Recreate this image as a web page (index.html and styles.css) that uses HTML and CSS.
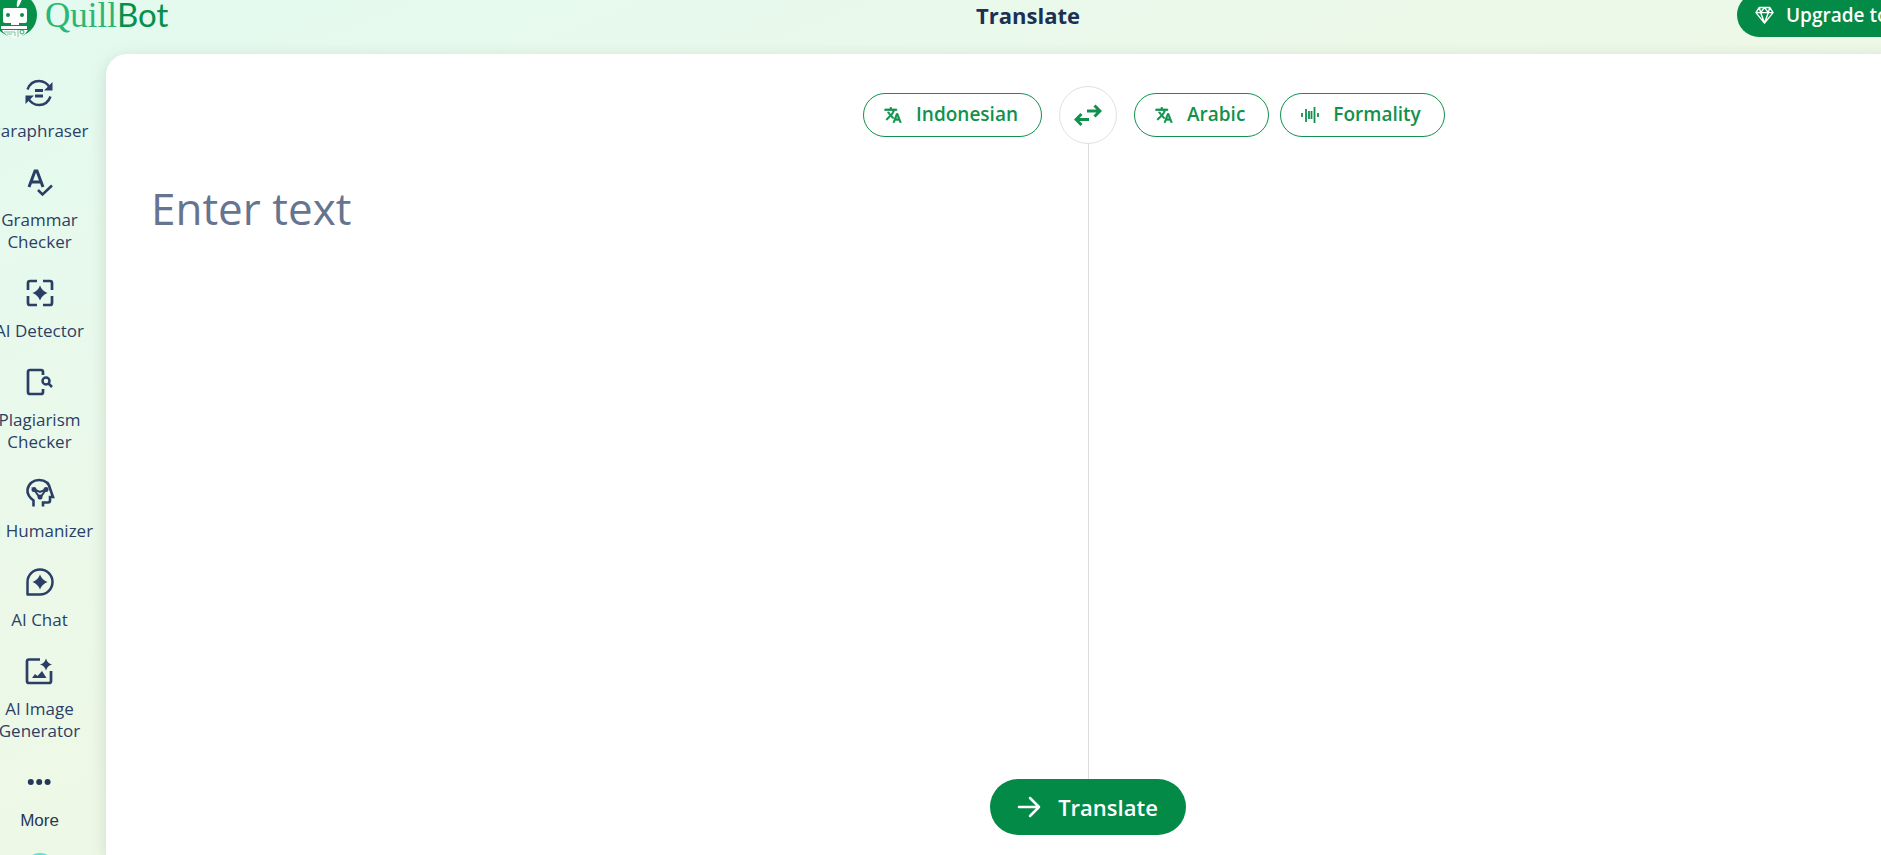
FILE: index.html
```html
<!DOCTYPE html>
<html lang="en">
<head>
<meta charset="utf-8">
<title>Translate - QuillBot</title>
<link rel="stylesheet" href="styles.css">
</head>
<body>
<div class="app">
  <header class="header">
    <a class="logo" href="#">
      <svg class="logo-mark" viewBox="0 0 46 46" aria-hidden="true">
        <circle cx="23" cy="23" r="22" fill="#06904a"/>
        <path d="M25 15c-1-5 1-10 6-12-1 4-2 8-5 12z" fill="#fff"/>
        <rect x="11" y="16" width="24" height="15" rx="2" fill="#fff"/>
        <path d="M19 31h8v2h-8zM9 34h26v3H9z" fill="#fff"/>
        <circle cx="16" cy="23" r="2" fill="#06904a"/><circle cx="30" cy="23" r="2" fill="#06904a"/>
        <path d="M10 38h26l-3 4-5 3-5 1-7-2-5-4z" fill="#f4fcf7"/>
        <path d="M12 40h11v4M15 42h5M26 38v7" fill="none" stroke="#7cc7a0"/>
        <circle cx="30" cy="40" r="2" fill="none" stroke="#3aa871"/>
      </svg>
      <span class="logo-text"><span class="logo-quill">Quill</span><span class="logo-bot">Bot</span></span>
    </a>
    <h1 class="title">Translate</h1>
    <div class="header-end">
      <button class="upgrade" type="button">
        <svg class="gem" viewBox="0 0 20 20" fill="none" stroke="currentColor" stroke-width="1.500" stroke-linejoin="round" aria-hidden="true"><path d="M4.500 1.500h11L19 7l-9 11L1 7zM1 7h18M6 7l4 11 4-11M4.500 1.500L6 7l4-5.500L14 7l1.500-5.500"/></svg>
        Upgrade to Premium
      </button>
    </div>
  </header>
  <div class="body">
    <nav class="sidebar">
      <a class="item" href="#">
        <svg class="icon" viewBox="0 0 30 30" aria-hidden="true"><path d="M3.500 11.500C5.500 6 10 3 15 3c5 0 8.500 2.500 11 7M26.500 18.500C24.500 24 20 27 15 27c-5 0-8.500-2.500-11-7" stroke-width="2.500"/><path class="solid" d="M28.500 4V12.500H20zM1.500 26V17.500H10z"/><path d="M11 12.500h8M11 18h8" stroke-width="3"/></svg>
        <span>Paraphraser</span></a>
      <a class="item" href="#">
        <svg class="icon" viewBox="0 0 30 30" aria-hidden="true"><path d="M4 20L10 4h2l6 16M6.500 15h9" stroke-width="3"/><path d="M13 23l4.500 4.500L27 18.500" stroke-width="2.500"/></svg>
        <span>Grammar<br>Checker</span></a>
      <a class="item" href="#">
        <svg class="icon" viewBox="0 0 30 30" aria-hidden="true"><path d="M3 12V5q0-2 2-2h7M18 3h7q2 0 2 2v7M27 18v7q0 2-2 2h-7M12 27H5q-2 0-2-2v-7" stroke-width="2.700"/><path class="solid" d="M15 7.500q2 5.500 7.500 7.500-5.500 2-7.500 7.500-2-5.500-7.500-7.500 5.500-2 7.500-7.500z"/></svg>
        <span>AI Detector</span></a>
      <a class="item" href="#">
        <svg class="icon" viewBox="0 0 30 30" aria-hidden="true"><path d="M19 8V5q0-2-2-2H6Q4 3 4 5v20q0 2 2 2h11q2 0 2-2v-3" stroke-width="2.700"/><circle cx="22" cy="14" r="3.500" stroke-width="2.500"/><path d="M24.500 16.500L28 20" stroke-width="2.500"/></svg>
        <span>Plagiarism<br>Checker</span></a>
      <a class="item" href="#">
        <svg class="icon" viewBox="0 0 30 30" aria-hidden="true"><path d="M8.500 28.500v-6C4.500 19.500 2 16 2.500 11.500 3.500 5.500 8.500 2 14 2c6.500 0 10.500 4 11.500 10l2.500 7h-3v3.500q0 2-2 2h-5v4" stroke-width="2.600"/><path d="M9 11.500l6 2.500 6-2.500L15 20z" stroke-width="2"/><path class="solid" d="M6.500 11.500a2.500 2.500 0 1 1 5 0a2.500 2.500 0 1 1-5 0zM18.500 11.500a2.500 2.500 0 1 1 5 0a2.500 2.500 0 1 1-5 0zM12.500 19a2.500 2.500 0 1 1 5 0a2.500 2.500 0 1 1-5 0z"/></svg>
        <span>AI Humanizer</span></a>
      <a class="item" href="#">
        <svg class="icon" viewBox="0 0 30 30" aria-hidden="true"><path d="M2.500 27.500V15A12.500 12.500 0 1 1 15 27.500z" stroke-width="2.500" stroke-linejoin="round"/><path class="solid" d="M15 7.500q2 5.500 7.500 7.500-5.500 2-7.500 7.500-2-5.500-7.500-7.500 5.500-2 7.500-7.500z"/></svg>
        <span>AI Chat</span></a>
      <a class="item" href="#">
        <svg class="icon" viewBox="0 0 30 30" aria-hidden="true"><path d="M16 3.500H5q-2 0-2 2V25q0 2 2 2h20q2 0 2-2V15" stroke-width="2.700"/><path class="solid" d="M22 2.500q1.500 5 6 6-4.500 1-6 6-1.500-5-6-6 4.500-1 6-6zM8 22l3-4 2.500 2L18 15l4.500 7z"/></svg>
        <span>AI Image<br>Generator</span></a>
      <button class="item item-more" type="button">
        <svg class="icon" viewBox="0 0 30 30" aria-hidden="true"><path class="solid" d="M3.800 15a3 3 0 1 1 6 0a3 3 0 1 1-6 0zM12.200 15a3 3 0 1 1 6 0a3 3 0 1 1-6 0zM20.600 15a3 3 0 1 1 6 0a3 3 0 1 1-6 0z"/></svg>
        <span>More</span></button>
      <a class="dot" href="#" aria-label="Extension"></a>
    </nav>
    <main class="card">
      <div class="toolbar">
        <div class="source">
          <button class="chip" type="button">
            <svg class="chip-icon" viewBox="0 0 24 24" aria-hidden="true"><path class="glyph" d="M12.870 15.070l-2.540-2.510.03-.03A17.520 17.520 0 0 0 14.070 6H17V4h-7V2H8v2H1v2h11.170C11.500 7.920 10.440 9.750 9 11.350 8.070 10.320 7.300 9.190 6.690 8h-2c.73 1.630 1.730 3.170 2.980 4.560l-5.090 5.020L4 19l5-5 3.110 3.110.76-2.040zM18.500 10h-2L12 22h2l1.120-3h4.750L21 22h2l-4.500-12zm-2.620 7l1.620-4.330L19.120 17h-3.240z"/></svg>
            Indonesian</button>
        </div>
        <button class="swap" type="button" aria-label="Swap languages">
          <svg class="swap-icon" viewBox="0 0 28 24" fill="none" stroke="currentColor" stroke-width="3" aria-hidden="true"><path d="M13 8h13M20.500 2.500L26 8l-5.500 5.500M15 16.500H2M7.500 11L2 16.500l5.500 5.500"/></svg>
        </button>
        <div class="target">
          <button class="chip" type="button">
            <svg class="chip-icon" viewBox="0 0 24 24" aria-hidden="true"><path class="glyph" d="M12.870 15.070l-2.540-2.510.03-.03A17.520 17.520 0 0 0 14.070 6H17V4h-7V2H8v2H1v2h11.170C11.500 7.920 10.440 9.750 9 11.350 8.070 10.320 7.300 9.190 6.690 8h-2c.73 1.630 1.730 3.170 2.980 4.560l-5.090 5.020L4 19l5-5 3.110 3.110.76-2.040zM18.500 10h-2L12 22h2l1.120-3h4.750L21 22h2l-4.500-12zm-2.620 7l1.620-4.330L19.120 17h-3.240z"/></svg>
            Arabic</button>
          <button class="chip" type="button">
            <svg class="chip-icon" viewBox="0 0 18 18" fill="none" stroke="currentColor" stroke-width="1.800" aria-hidden="true"><path d="M1 7v4M5 3v13M8 5v8M10.500 5v8M13.500 1v16M17 7v4"/></svg>
            Formality</button>
        </div>
      </div>
      <div class="panes">
        <textarea class="entry" placeholder="Enter text" aria-label="Enter text"></textarea>
        <div class="output"></div>
      </div>
      <div class="actions">
        <button class="translate" type="button">
          <svg class="arrow" viewBox="0 0 24 24" fill="none" stroke="currentColor" stroke-width="2.500" stroke-linecap="round" stroke-linejoin="round" aria-hidden="true"><path d="M2 12h20M13 3l9 9-9 9"/></svg>
          Translate</button>
      </div>
    </main>
  </div>
</div>
</body>
</html>
```

FILE: styles.css
```css
* { box-sizing: border-box; }

body {
  margin: 0;
  height: 100vh;
  display: flow-root;
  overflow: hidden;
  color: #253858;
  font-family: "Open Sans", sans-serif;
  background: #eaf8ea;
}

button { font: inherit; cursor: pointer; }
a { color: inherit; text-decoration: none; }

.app {
  display: flex;
  flex-direction: column;
  height: calc(100vh + 22px);
  margin: -22px -202px 0 -27px;
  background: linear-gradient(to bottom right, #e2faf0 0%, #e9f9eb 25%, #eef8e6 50%, #eef8e6 100%);
}

.header {
  display: grid;
  grid-template-columns: 1fr auto 1fr;
  align-items: center;
  height: 76px;
  padding-bottom: 2px;
}

.logo {
  display: flex;
  align-items: center;
  gap: 7px;
  margin-left: 19px;
}
.logo-mark { width: 46px; height: 46px; }
.logo-text {
  display: flex;
  align-items: baseline;
  line-height: 40px;
}
.logo-quill { font-family: "Liberation Serif", serif; font-size: 35px; color: #2bb673; }
.logo-bot { font-family: Lato, sans-serif; font-size: 33px; color: #06904a; }

.title {
  margin: 0;
  color: #1b3054;
  font-size: 22px;
  font-weight: 700;
  line-height: 30px;
}

.header-end { display: flex; justify-content: flex-end; padding-right: 109px; }
.upgrade {
  display: flex;
  align-items: center;
  gap: 12px;
  width: 237px;
  height: 44px;
  padding: 0 18px;
  border: 0;
  border-radius: 22px;
  background: #038a47;
  color: #fff;
  font-size: 19px;
  font-weight: 600;
  white-space: nowrap;
}
.gem { width: 19px; height: 19px; flex: none; }

.body { display: flex; flex: 1; min-height: 0; }

.sidebar {
  display: flex;
  flex-direction: column;
  align-items: center;
  gap: 25px;
  width: 133px;
  padding-top: 24px;
}
.item {
  display: flex;
  flex-direction: column;
  align-items: center;
  gap: 12px;
  padding: 0;
  border: 0;
  background: none;
  color: #2b3f66;
  font-size: 17px;
  line-height: 22px;
  text-align: center;
  white-space: nowrap;
}
.item-more {
  gap: 13px;
  color: #253858;
  font-family: "Liberation Sans", sans-serif;
}
.icon { width: 30px; height: 30px; fill: none; stroke: currentColor; }
.icon .solid { fill: currentColor; stroke: none; }
.dot { flex: none; width: 30px; height: 30px; margin-top: -4px; border-radius: 50%; background: #5cdede; }

.card {
  display: flex;
  flex-direction: column;
  flex: 1;
  padding-right: 13px;
  border-radius: 21px 0 0 0;
  background: #fff;
  box-shadow: 0 4px 16px rgba(60, 90, 60, 0.18);
}

.toolbar {
  display: grid;
  grid-template-columns: 1fr auto 1fr;
  align-items: center;
  gap: 17px;
  padding-top: 32px;
}
.source { display: flex; justify-content: flex-end; }
.target { display: flex; gap: 11px; }

.chip {
  display: flex;
  align-items: center;
  gap: 14px;
  height: 44px;
  padding: 0 23px 3px 20px;
  border: 1px solid #11914d;
  border-radius: 22px;
  background: #fff;
  color: #11914d;
  font-size: 19px;
  font-weight: 600;
}
.chip-icon { width: 18px; height: 18px; margin-top: 3px; }
.glyph { fill: currentColor; stroke: currentColor; stroke-width: 1; }

.swap {
  display: grid;
  place-items: center;
  width: 58px;
  height: 58px;
  padding: 0;
  border: 1px solid #dfe1e6;
  border-radius: 50%;
  background: #fff;
  color: #11914d;
}
.swap-icon { width: 28px; height: 24px; }

.panes { display: grid; grid-template-columns: 1fr 1fr; flex: 1; min-height: 0; }
.entry {
  padding: 34px 45px;
  border: 0;
  outline: 0;
  resize: none;
  background: none;
  color: #253858;
  font-family: inherit;
  font-size: 44px;
  line-height: 60px;
}
.entry::placeholder { color: #66748f; opacity: 1; }
.output { border-left: 1px solid #dcdcdc; }

.actions { display: flex; justify-content: center; padding-bottom: 20px; }
.translate {
  display: flex;
  align-items: center;
  gap: 17px;
  height: 56px;
  padding: 0 28px 0 27px;
  border: 0;
  border-radius: 28px;
  background: #038a47;
  color: #fff;
  font-size: 22px;
  font-weight: 600;
}
.arrow { width: 24px; height: 24px; }
```
